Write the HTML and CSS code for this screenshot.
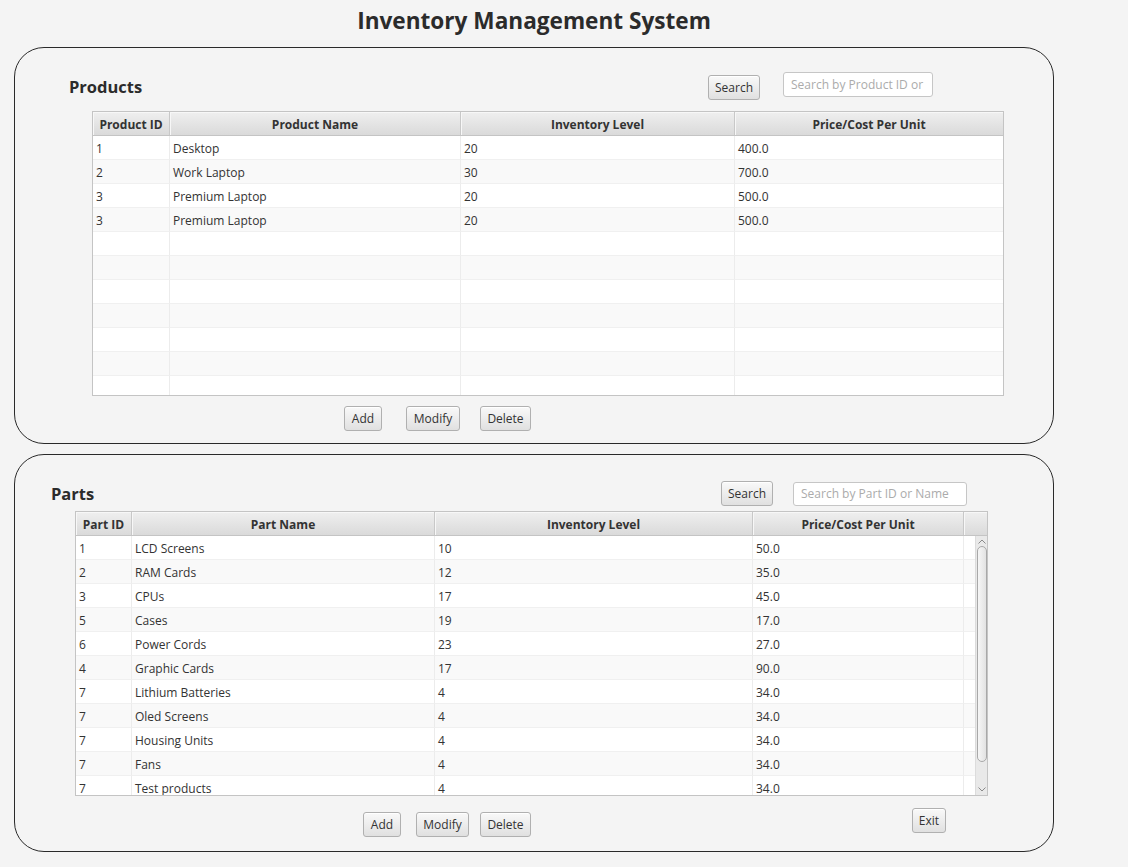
FILE: index.html
```html
<!DOCTYPE html>
<html lang="en">
<head>
<meta charset="utf-8">
<title>Inventory Management System</title>
<link rel="stylesheet" href="styles.css">
</head>
<body>
<main class="app">
  <h1 class="title">Inventory Management System</h1>

  <section class="pane pane-products">
    <div class="pane-head">
      <h2 class="pane-label">Products</h2>
      <div class="search">
        <button class="btn btn-search">Search</button>
        <input class="field field-products" type="text" placeholder="Search by Product ID or Name">
      </div>
    </div>
    <div class="table table-products">
      <div class="thead">
        <div class="th c-pid">Product ID</div>
        <div class="th c-pname">Product Name</div>
        <div class="th c-pinv">Inventory Level</div>
        <div class="th c-pprice">Price/Cost Per Unit</div>
      </div>
      <div class="tbody">
        <div class="rows">
          <div class="tr"><div class="td c-pid">1</div><div class="td c-pname">Desktop</div><div class="td c-pinv">20</div><div class="td c-pprice">400.0</div></div>
          <div class="tr"><div class="td c-pid">2</div><div class="td c-pname">Work Laptop</div><div class="td c-pinv">30</div><div class="td c-pprice">700.0</div></div>
          <div class="tr"><div class="td c-pid">3</div><div class="td c-pname">Premium Laptop</div><div class="td c-pinv">20</div><div class="td c-pprice">500.0</div></div>
          <div class="tr"><div class="td c-pid">3</div><div class="td c-pname">Premium Laptop</div><div class="td c-pinv">20</div><div class="td c-pprice">500.0</div></div>
          <div class="tr"><div class="td c-pid"></div><div class="td c-pname"></div><div class="td c-pinv"></div><div class="td c-pprice"></div></div>
          <div class="tr"><div class="td c-pid"></div><div class="td c-pname"></div><div class="td c-pinv"></div><div class="td c-pprice"></div></div>
          <div class="tr"><div class="td c-pid"></div><div class="td c-pname"></div><div class="td c-pinv"></div><div class="td c-pprice"></div></div>
          <div class="tr"><div class="td c-pid"></div><div class="td c-pname"></div><div class="td c-pinv"></div><div class="td c-pprice"></div></div>
          <div class="tr"><div class="td c-pid"></div><div class="td c-pname"></div><div class="td c-pinv"></div><div class="td c-pprice"></div></div>
          <div class="tr"><div class="td c-pid"></div><div class="td c-pname"></div><div class="td c-pinv"></div><div class="td c-pprice"></div></div>
          <div class="tr"><div class="td c-pid"></div><div class="td c-pname"></div><div class="td c-pinv"></div><div class="td c-pprice"></div></div>
        </div>
      </div>
    </div>
    <div class="actions actions-products">
      <button class="btn btn-add">Add</button>
      <button class="btn btn-modify">Modify</button>
      <button class="btn btn-delete">Delete</button>
    </div>
  </section>

  <section class="pane pane-parts">
    <div class="pane-head">
      <h2 class="pane-label">Parts</h2>
      <div class="search">
        <button class="btn btn-search">Search</button>
        <input class="field field-parts" type="text" placeholder="Search by Part ID or Name">
      </div>
    </div>
    <div class="table table-parts">
      <div class="thead">
        <div class="th c-id">Part ID</div>
        <div class="th c-name">Part Name</div>
        <div class="th c-inv">Inventory Level</div>
        <div class="th c-price">Price/Cost Per Unit</div>
        <div class="th c-fill"></div>
      </div>
      <div class="tbody">
        <div class="rows">
          <div class="tr"><div class="td c-id">1</div><div class="td c-name">LCD Screens</div><div class="td c-inv">10</div><div class="td c-price">50.0</div><div class="td c-gap"></div></div>
          <div class="tr"><div class="td c-id">2</div><div class="td c-name">RAM Cards</div><div class="td c-inv">12</div><div class="td c-price">35.0</div><div class="td c-gap"></div></div>
          <div class="tr"><div class="td c-id">3</div><div class="td c-name">CPUs</div><div class="td c-inv">17</div><div class="td c-price">45.0</div><div class="td c-gap"></div></div>
          <div class="tr"><div class="td c-id">5</div><div class="td c-name">Cases</div><div class="td c-inv">19</div><div class="td c-price">17.0</div><div class="td c-gap"></div></div>
          <div class="tr"><div class="td c-id">6</div><div class="td c-name">Power Cords</div><div class="td c-inv">23</div><div class="td c-price">27.0</div><div class="td c-gap"></div></div>
          <div class="tr"><div class="td c-id">4</div><div class="td c-name">Graphic Cards</div><div class="td c-inv">17</div><div class="td c-price">90.0</div><div class="td c-gap"></div></div>
          <div class="tr"><div class="td c-id">7</div><div class="td c-name">Lithium Batteries</div><div class="td c-inv">4</div><div class="td c-price">34.0</div><div class="td c-gap"></div></div>
          <div class="tr"><div class="td c-id">7</div><div class="td c-name">Oled Screens</div><div class="td c-inv">4</div><div class="td c-price">34.0</div><div class="td c-gap"></div></div>
          <div class="tr"><div class="td c-id">7</div><div class="td c-name">Housing Units</div><div class="td c-inv">4</div><div class="td c-price">34.0</div><div class="td c-gap"></div></div>
          <div class="tr"><div class="td c-id">7</div><div class="td c-name">Fans</div><div class="td c-inv">4</div><div class="td c-price">34.0</div><div class="td c-gap"></div></div>
          <div class="tr"><div class="td c-id">7</div><div class="td c-name">Test products</div><div class="td c-inv">4</div><div class="td c-price">34.0</div><div class="td c-gap"></div></div>
        </div>
        <div class="vscroll">
          <svg class="arrow" width="8" height="5" viewBox="0 0 8 5"><path d="M0.5 4.5 L4 1 L7.5 4.5" fill="none" stroke="#8a8a8a" stroke-width="1"/></svg>
          <div class="track"><div class="thumb"></div></div>
          <svg class="arrow" width="8" height="5" viewBox="0 0 8 5"><path d="M0.5 0.5 L4 4 L7.5 0.5" fill="none" stroke="#8a8a8a" stroke-width="1"/></svg>
        </div>
      </div>
    </div>
    <div class="actions actions-parts">
      <button class="btn btn-add">Add</button>
      <button class="btn btn-modify">Modify</button>
      <button class="btn btn-delete">Delete</button>
      <button class="btn btn-exit">Exit</button>
    </div>
  </section>
</main>
</body>
</html>
```

FILE: styles.css
```css
* { box-sizing: border-box; }

html, body {
  margin: 0;
  padding: 0;
  background: #f4f4f4;
}

body {
  font-family: "Open Sans", "Noto Sans", sans-serif;
  font-size: 12px;
  color: #333333;
  width: 1128px;
  height: 867px;
  overflow: hidden;
}

.app {
  width: 1040px;
  margin-left: 14px;
  display: flex;
  flex-direction: column;
}

.title {
  margin: 0;
  height: 47px;
  padding-top: 5px;
  text-align: center;
  font-size: 22.6px;
  font-weight: 700;
  line-height: 32px;
  color: #2b2b2b;
}

.pane {
  border: 1px solid #2a2a2a;
  border-radius: 30px;
  display: flex;
  flex-direction: column;
}

.pane-products {
  height: 397px;
  padding-top: 25px;
}

.pane-parts {
  height: 398px;
  margin-top: 10px;
  padding-top: 26px;
}

.pane-head {
  display: flex;
  align-items: center;
  height: 27px;
}

.pane-products .pane-head {
  padding-left: 54px;
  padding-right: 120px;
}

.pane-parts .pane-head {
  height: 25px;
  padding-left: 36px;
  padding-right: 86px;
}

.pane-label {
  margin: 0;
  font-size: 16.5px;
  font-weight: 700;
  color: #2b2b2b;
  line-height: 20px;
}

.search {
  margin-left: auto;
  display: flex;
  align-items: center;
}

.pane-products .search .btn { margin-top: 2px; }

.btn {
  font-family: inherit;
  font-size: 12px;
  color: #333333;
  height: 25px;
  padding: 0;
  border: 1px solid #b0b0b0;
  border-radius: 3px;
  background: linear-gradient(#f9f9f9, #e0e0e0);
  box-shadow: inset 0 1px 0 #ffffff;
  line-height: 22px;
  text-align: center;
}

.btn-search { width: 52px; }

.field {
  font-family: inherit;
  font-size: 12px;
  height: 25px;
  padding: 0 7px;
  border: 1px solid #c6c6c6;
  border-radius: 3px;
  background: #ffffff;
  color: #333;
  outline: none;
}

.field::placeholder { color: #ababab; }

.field-products {
  width: 150px;
  margin-left: 23px;
  margin-top: -4px;
}

.field-parts {
  width: 174px;
  margin-left: 20px;
  height: 24px;
}

/* tables */
.table {
  border: 1px solid #c4c4c4;
  background: #ffffff;
  display: flex;
  flex-direction: column;
  height: 285px;
  overflow: hidden;
}

.table-products {
  width: 912px;
  margin-left: 77px;
  margin-top: 11px;
}

.table-parts {
  width: 913px;
  margin-left: 60px;
  margin-top: 5px;
}

.thead {
  display: flex;
  height: 24px;
  flex: none;
  background: linear-gradient(#efefef, #dadada);
  border-bottom: 1px solid #c4c4c4;
}

.th {
  flex: none;
  border-right: 1px solid #c8c8c8;
  box-shadow: inset 1px 1px 0 #f7f7f7;
  font-weight: 700;
  text-align: center;
  padding-top: 1px;
  line-height: 23px;
  color: #333333;
  white-space: nowrap;
}

.tbody {
  flex: 1;
  display: flex;
  overflow: hidden;
}

.rows {
  flex: 1;
  display: flex;
  flex-direction: column;
}

.tr {
  display: flex;
  height: 24px;
  flex: none;
  background: #ffffff;
}

.tr:nth-child(even) { background: #f9f9f9; }

.td {
  flex: none;
  border-right: 1px solid #ececec;
  border-bottom: 1px solid #f0f0f0;
  padding-left: 3px;
  padding-top: 2px;
  line-height: 21px;
  white-space: nowrap;
  overflow: hidden;
}

.c-pid { width: 77px; }
.c-pname { width: 291px; }
.c-pinv { width: 274px; }
.c-pprice { width: 269px; }

.c-id { width: 56px; }
.c-name { width: 303px; }
.c-inv { width: 318px; }
.c-price { width: 211px; }
.c-fill { width: 24px; border-right: none; }
.c-gap { width: 11px; border-right: none; }

.vscroll {
  flex: none;
  width: 13px;
  background: #e9e9e9;
  border-left: 1px solid #dcdcdc;
  display: flex;
  flex-direction: column;
  align-items: center;
}

.arrow {
  flex: none;
  margin: 3px 0 2px;
}

.vscroll .arrow:last-child { margin: 4px 0 3px; }

.track {
  flex: 1;
  width: 100%;
  padding: 0 1px;
}

.thumb {
  height: 216px;
  border: 1px solid #a8a8a8;
  border-radius: 5px;
  background: linear-gradient(90deg, #f6f6f6, #e2e2e2);
}

/* action buttons */
.actions {
  display: flex;
  align-items: center;
}

.actions-products {
  margin-top: 10px;
  padding-left: 329px;
}

.actions-parts {
  margin-top: 16px;
  padding-left: 348px;
}

.btn-add { width: 38px; }
.btn-modify { width: 54px; }
.btn-delete { width: 51px; }

.actions-products .btn-modify { margin-left: 24px; }
.actions-products .btn-delete { margin-left: 20px; }

.actions-parts .btn-modify { margin-left: 15px; width: 53px; }
.actions-parts .btn-delete { margin-left: 11px; }

.btn-exit {
  width: 34px;
  margin-left: 381px;
  margin-top: -8px;
}
```
